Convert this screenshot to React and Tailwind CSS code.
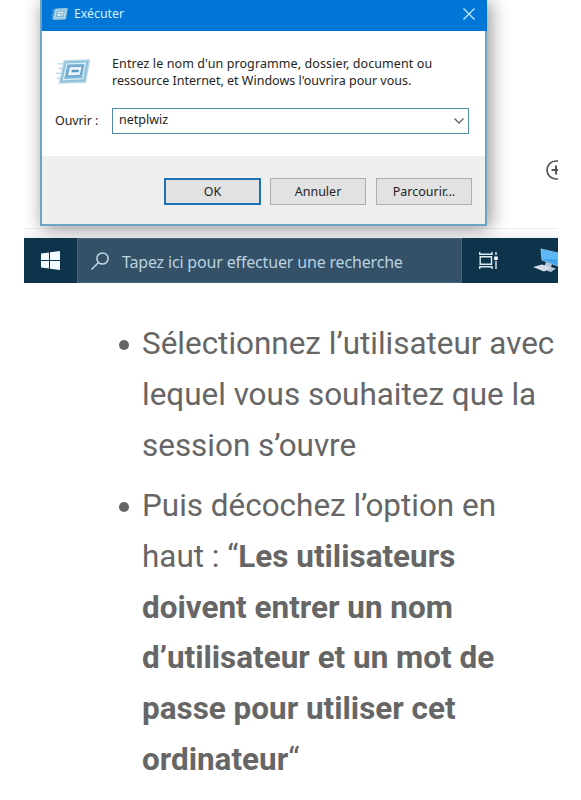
import React from "react";

// Icon of the Run window, used in the title bar and in the body
const RunIcon = ({ className }) => (
  <svg viewBox="0 0 36 26" className={className} fill="none">
    <path d="M2 5h8M3 10h5M0 15h6M1 20h5" stroke="#b5d6e8" strokeWidth="1.300" />
    <path d="M9 2 35 1 31 24 4 25Z" fill="#8dbfda" stroke="#b3d5e6" strokeWidth="1.500" />
    <path d="M11.500 5 31 4.300 28 20.500 8 21.500Z" stroke="#d5f1f8" strokeWidth="1.400" fill="#7fb4d6" />
    <path d="M14.500 8 27.500 7.500 25.500 17 12 17.700Z" fill="#eaf6fc" stroke="#5f9dc6" strokeWidth="1" />
    <path d="M16.500 12.500h7.500" stroke="#5b98c6" strokeWidth="2.600" />
  </svg>
);

const DialogButton = ({ children, className }) => (
  <button className={`flex h-[27px] items-center justify-center bg-[#e2e2e2] pt-px ${className}`}>
    {children}
  </button>
);

const RunDialog = () => (
  <div className="ml-4 flex h-[226px] w-[447px] shrink-0 flex-col border-x-2 border-b-2 border-[#6aa5c8] bg-white font-['Noto_Sans','Open_Sans',sans-serif] text-[12.500px] text-[#242424] shadow-[3px_2px_18px_rgba(0,0,0,0.45)]">
    {/* Title bar */}
    <div className="-mr-0.5 flex h-[31px] shrink-0 items-center bg-[#0076d7] pl-[9px] pr-3 pb-[3px]">
      <RunIcon className="h-3 w-[17px]" />
      <span className="ml-[6px] text-[12.300px] text-[#d9f0ff]">Exécuter</span>
      <svg viewBox="0 0 12 12" className="ml-auto h-3 w-3" stroke="#c9e8ff" strokeWidth="1.300">
        <path d="M.5.5l11 11M11.500.5l-11 11" />
      </svg>
    </div>

    <div className="flex h-[125px] shrink-0 flex-col pl-[13px]">
      <div className="flex pt-[24px]">
        <RunIcon className="mt-[4px] h-[25px] w-[36px] shrink-0" />
        <p className="ml-[21px] whitespace-nowrap leading-[17px]">
          <span className="tracking-[0.100px]">Entrez le nom d'un programme, dossier, document ou</span>
          <br />
          ressource Internet, et Windows l'ouvrira pour vous.
        </p>
      </div>
      <div className="mt-[19px] flex items-center">
        <span className="w-[57px] whitespace-nowrap tracking-[-0.100px]">Ouvrir :</span>
        <div className="flex h-[26px] w-[357px] items-center justify-between border border-[#4f8fa3] pl-[6px] pr-[4px]">
          <span className="pb-px">netplwiz</span>
          <svg viewBox="0 0 10 6" className="h-[6px] w-[10px]" fill="none" stroke="#626262" strokeWidth="1.300">
            <path d="M.5.5 5 5 9.500.5" />
          </svg>
        </div>
      </div>
    </div>

    <div className="flex flex-1 items-start bg-[#efefef] pl-[122px] pt-[22px]">
      <DialogButton className="w-[97px] border-2 border-[#1e72b3]">OK</DialogButton>
      <DialogButton className="ml-[9px] w-[96px] border border-[#adadad]">Annuler</DialogButton>
      <DialogButton className="ml-[10px] w-[96px] border border-[#adadad]">Parcourir...</DialogButton>
    </div>
  </div>
);

const Taskbar = () => (
  <div className="flex h-[45px] shrink-0 items-center bg-[#0e344b]">
    <div className="flex h-full w-[53px] items-center justify-center">
      <svg viewBox="0 0 19 19" className="h-[19px] w-[19px]" fill="#f1fbff">
        <path d="M0 2.600 8 1.500V9H0zM9 1.300 19 0v9H9zM0 10h8v7.500L0 16.400zM9 10h10v9L9 17.700z" />
      </svg>
    </div>
    <div className="flex h-full w-[385px] items-center border border-[#486579] bg-[#345167] pl-[13px]">
      <svg viewBox="0 0 18 18" className="h-[18px] w-[18px]" fill="none" stroke="#c3dbe9" strokeWidth="1.500">
        <circle cx="11.500" cy="6.500" r="5.600" />
        <path d="M7.500 10.500.5 17.500" />
      </svg>
      <span className="ml-[13px] whitespace-nowrap pt-[2px] font-['Noto_Sans','Open_Sans',sans-serif] text-[16px] tracking-[-0.170px] text-[#b9d2e2]">
        Tapez ici pour effectuer une recherche
      </span>
    </div>
    <svg viewBox="0 0 19 17" className="ml-[17px] h-[17px] w-[19px] shrink-0" fill="none" stroke="#dfecf2" strokeWidth="1.400">
      <path d="M.7 0v2.300h12.300V0M.7 17v-2.300h12.300V17M1.200 4.700h11.300v7.600H1.200zM17 0v3M17 9v8" />
      <path d="M15.200 4.500h3.600v3.600h-3.600z" fill="#fff" stroke="none" />
    </svg>
    <svg viewBox="0 0 25 25" className="ml-[35px] h-[25px] w-[25px] shrink-0">
      <path d="M8 1 25 5v13L9 12z" fill="#3fa2ea" stroke="#9bd6fa" strokeWidth=".8" />
      <path d="m9 2 16 4v5L9.500 11z" fill="#5db8f6" />
      <path d="m13 14 6 2-1 3 5 1.500-5 3.500-8-2.500z" fill="#b4c6d8" />
      <path d="m0 19 9-2.500 9 3-7 4z" fill="#d5dde8" />
    </svg>
  </div>
);

const App = () => {
  return (
    <div className="h-[800px] w-full overflow-hidden bg-white">
      {/* Desktop capture */}
      <section className="ml-6 flex h-[283px] w-[534px] flex-col overflow-hidden">
        <div className="flex h-[238px] shrink-0 bg-[linear-gradient(to_top,#f4f2f6_0,#fff_9px,#e7dfe4_9px,#fff_10px)]">
          <RunDialog />
          <svg viewBox="0 0 20 20" className="ml-[59px] mt-[160px] h-[20px] w-[20px] shrink-0" fill="none" stroke="#555" strokeWidth="1.700">
            <circle cx="10" cy="10" r="9" />
            <path d="M5.500 10h9M10 5.500v9" strokeWidth="2" />
          </svg>
        </div>
        <Taskbar />
      </section>

      {/* Steps */}
      <ul className="ml-[142px] mt-[36px] list-none whitespace-nowrap font-['Roboto',sans-serif] text-[31.450px] leading-[50.900px] text-[#666]">
        <li className="mb-[9px] flex">
          <span className="-ml-[23px] mr-[13px] mt-[21px] h-[10px] w-[10px] rounded-full bg-[#666]" />
          <p>
            Sélectionnez l’utilisateur avec
            <br />
            lequel vous souhaitez que la
            <br />
            session s’ouvre
          </p>
        </li>
        <li className="flex">
          <span className="-ml-[23px] mr-[13px] mt-[21px] h-[10px] w-[10px] rounded-full bg-[#666]" />
          <p>
            Puis décochez l’option en
            <br />
            haut : “<strong>Les utilisateurs</strong>
            <br />
            <strong>doivent entrer un nom</strong>
            <br />
            <strong>d’utilisateur et un mot de</strong>
            <br />
            <strong>passe pour utiliser cet</strong>
            <br />
            <strong>ordinateur</strong>“
          </p>
        </li>
      </ul>
    </div>
  );
};

export default App;
